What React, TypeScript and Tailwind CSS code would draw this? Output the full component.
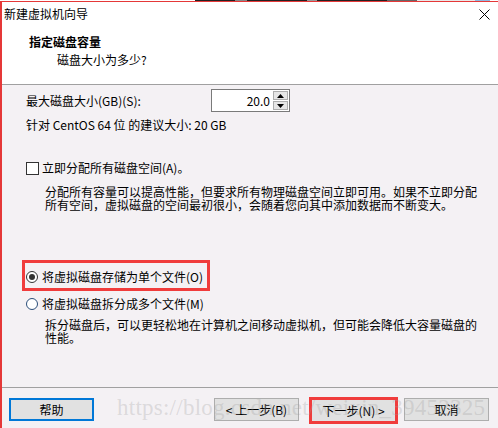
import React from 'react';

const Spin: React.FC = () => (
  <div className="flex h-[23px] w-[79px] border border-[#7a7a7a] bg-white">
    <div className="flex-1 pr-[3px] text-right leading-[21px]">20.0</div>
    <div className="my-[1px] mr-[1px] flex w-[15px] flex-col gap-[1px]">
      <div className="flex h-[9px] items-center justify-center border border-[#adadad] bg-[#e6e6e6]">
        <svg width="7" height="4" viewBox="0 0 7 4">
          <path d="M0 4 L3.5 0 L7 4 Z" fill="#000" />
        </svg>
      </div>
      <div className="flex h-[9px] items-center justify-center border border-[#adadad] bg-[#e6e6e6]">
        <svg width="7" height="4" viewBox="0 0 7 4">
          <path d="M0 0 L7 0 L3.5 4 Z" fill="#000" />
        </svg>
      </div>
    </div>
  </div>
);

const WinButton: React.FC<{ label: string; className?: string }> = ({ label, className }) => (
  <div
    className={`flex items-center justify-center bg-[#e1e1e1] text-[12px] leading-none text-black ${className ?? 'h-[23px] w-[85px] border border-[#adadad]'}`}
  >
    {label}
  </div>
);

const App: React.FC = () => {
  return (
    <div className="relative flex h-[428px] w-[498px] flex-col overflow-hidden bg-white font-['Noto_Sans_CJK_SC',sans-serif] text-[12px] text-black">
      {/* strip of whatever sits above the window */}
      <div className="flex h-[1px] shrink-0">
        <div className="w-[195px] bg-white" />
        <div className="w-[40px] bg-[#222]" />
        <div className="w-[12px] bg-[#888]" />
        <div className="w-[60px] bg-[#222]" />
        <div className="w-[10px] bg-[#999]" />
        <div className="w-[70px] bg-[#222]" />
        <div className="w-[30px] bg-[#666]" />
        <div className="w-[58px] bg-[#e8e8e8]" />
        <div className="w-[15px] bg-[#8fb8e0]" />
        <div className="flex-1 bg-white" />
      </div>

      <div className="flex flex-1 flex-col border-t border-l-2 border-[#e53838]">
        {/* title + header */}
        <div className="h-[82px] shrink-0 bg-white">
          <div className="flex items-start justify-between pt-[4px] pr-[8px] pl-[2px]">
            <span className="leading-[16px]">新建虚拟机向导</span>
            <svg width="11" height="11" viewBox="0 0 11 11" className="mt-[3px]">
              <path d="M0.5 0.5 L10.5 10.5 M10.5 0.5 L0.5 10.5" stroke="#000" strokeWidth="1" />
            </svg>
          </div>
          <div className="mt-[12px] pl-[27px] font-bold leading-[16px]">指定磁盘容量</div>
          <div className="mt-[2px] pl-[55px] leading-[16px]">磁盘大小为多少?</div>
        </div>

        {/* body */}
        <div className="flex flex-1 flex-col border-t border-[#a0a0a0] bg-[#f4f1f4] pl-[24px]">
          <div className="mt-[4px] flex items-center">
            <span className="w-[185px] leading-[16px]">最大磁盘大小(GB)(S):</span>
            <Spin />
          </div>
          <div className="mt-[5px] leading-[16px]">针对 CentOS 64 位 的建议大小: 20 GB</div>

          <div className="mt-[27px] flex items-center gap-[3px] leading-[16px]">
            <div className="h-[13px] w-[13px] border border-[#333] bg-white" />
            <span>立即分配所有磁盘空间(A)。</span>
          </div>
          <div className="mt-[9px] pl-[19px] leading-[13px]">
            <div>分配所有容量可以提高性能，但要求所有物理磁盘空间立即可用。如果不立即分配</div>
            <div>所有空间，虚拟磁盘的空间最初很小，会随着您向其中添加数据而不断变大。</div>
          </div>

          <div className="mt-[49px] -ml-[4px] flex h-[31px] w-[188px] items-center border-[3px] border-[#f03c3c] pt-[2px] pl-[1px]">
            <div className="flex h-[12px] w-[12px] items-center justify-center rounded-full border border-[#333] bg-white">
              <div className="h-[6px] w-[6px] rounded-full bg-[#333]" />
            </div>
            <span className="ml-[4px] leading-[16px]">将虚拟磁盘存储为单个文件(O)</span>
          </div>
          <div className="mt-[5px] flex items-center leading-[16px]">
            <div className="h-[12px] w-[12px] rounded-full border border-[#2b4e7a] bg-white" />
            <span className="ml-[4px]">将虚拟磁盘拆分成多个文件(M)</span>
          </div>
          <div className="mt-[6px] pl-[19px] leading-[13px]">
            <div>拆分磁盘后，可以更轻松地在计算机之间移动虚拟机，但可能会降低大容量磁盘的</div>
            <div>性能。</div>
          </div>
        </div>

        {/* footer */}
        <div className="flex h-[41px] shrink-0 items-start border-t border-[#a0a0a0] bg-[#f4f1f4] pt-[10px] pl-[7px]">
          <WinButton label="帮助" className="h-[23px] w-[85px] border-2 border-[#0078d7]" />
          <WinButton label="< 上一步(B)" className="ml-[120px] h-[23px] w-[85px] border border-[#adadad]" />
          <div className="-mt-[1px] ml-[10px] h-[27px] w-[89px] border-[3px] border-[#f03c3c]">
            <WinButton label="下一步(N) >" className="h-[21px] w-[83px]" />
          </div>
          <WinButton label="取消" className="ml-[6px] h-[23px] w-[85px] border border-[#adadad]" />
        </div>
      </div>

      {/* blog watermark over the footer */}
      <div className="pointer-events-none absolute top-[396px] left-[117px] font-['Liberation_Serif',serif] text-[23px] leading-none tracking-[0.25px] whitespace-nowrap text-[#a0a0a0]/30">
        https://blog.csdn.net/weixin_39452325
      </div>
    </div>
  );
};

export default App;
